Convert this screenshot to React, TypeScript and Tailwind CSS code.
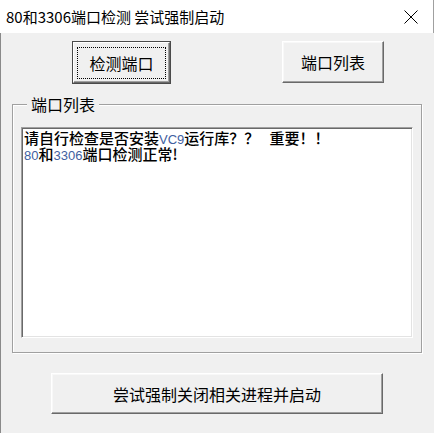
import React from 'react';

const cjk = { fontFamily: '"Noto Sans CJK SC", "Noto Sans", sans-serif' };

const Latin: React.FC<{ children: React.ReactNode }> = ({ children }) => (
    <span className="text-[#41609f] font-normal leading-none" style={{ fontFamily: '"Liberation Sans", sans-serif', fontSize: '13px' }}>
        {children}
    </span>
);

const ClassicButton: React.FC<{ label: string; className?: string; focused?: boolean }> = ({ label, className, focused }) => {
    if (focused) {
        return (
            <div className={`border border-[#4a4a4a] ${className ?? ''}`}>
                <div className="relative w-full h-full flex items-center justify-center bg-[#f0f0f0] border-t border-l border-white border-r border-b border-r-[#696969] border-b-[#696969] shadow-[inset_-1px_-1px_0_#a0a0a0]">
                    <span className="absolute left-[3px] right-[3px] top-[4px] bottom-[3px] border border-dotted border-black" />
                    <span className="text-[16px] text-black leading-none">{label}</span>
                </div>
            </div>
        );
    }
    return (
        <div className={`flex items-center justify-center bg-[#f0f0f0] border-t border-l border-white border-r border-b border-r-[#696969] border-b-[#696969] shadow-[inset_-1px_-1px_0_#a0a0a0,inset_1px_1px_0_#f8f8f8] ${className ?? ''}`}>
            <span className="text-[16px] text-black leading-none">{label}</span>
        </div>
    );
};

export default function App() {
    return (
        <div className="w-[434px] h-[433px] bg-[#f0f0f0] flex flex-col overflow-hidden text-black" style={cjk}>
            <div className="h-[33px] bg-white flex items-center justify-between pl-[6px] pr-[15px] border-r border-[#a0a0a0] shrink-0">
                <span className="text-[15px] leading-none">80和3306端口检测 尝试强制启动</span>
                <svg width="14" height="14" viewBox="0 0 14 14">
                    <path d="M0.5 0.5 L13.5 13.5 M13.5 0.5 L0.5 13.5" stroke="#000" strokeWidth="1" fill="none" />
                </svg>
            </div>
            <div className="flex-1 border-l border-[#8a8a8a] flex flex-col">
                <div className="flex mt-[8px]">
                    <ClassicButton label="检测端口" focused className="ml-[71px] w-[99px] h-[43px]" />
                    <ClassicButton label="端口列表" className="ml-[111px] w-[102px] h-[42px]" />
                </div>
                <div className="relative ml-[11px] mt-[20px] w-[410px] h-[249px] border border-[#a0a0a0] shadow-[inset_1px_1px_0_#fff,1px_1px_0_#fff] pl-[8px] pt-[22px]">
                    <span className="absolute left-[14px] top-[-10px] px-[4px] bg-[#f0f0f0] text-[16px] leading-[18px]">端口列表</span>
                    <div className="w-[392px] h-[211px] bg-white border border-t-[#a0a0a0] border-l-[#a0a0a0] border-r-white border-b-white shadow-[inset_1px_1px_0_#696969,inset_-1px_-1px_0_#e3e3e3] pl-[2px] pt-[2px] text-[15px] font-medium whitespace-pre">
                        <div className="h-[16px] leading-[16px]">请自行检查是否安装<Latin>VC9</Latin>运行库？？   重要！！</div>
                        <div className="h-[16px] leading-[16px]"><Latin>80</Latin>和<Latin>3306</Latin>端口检测正常!</div>
                    </div>
                </div>
                <ClassicButton label="尝试强制关闭相关进程并启动" className="ml-[50px] mt-[20px] w-[332px] h-[41px]" />
            </div>
        </div>
    );
}
